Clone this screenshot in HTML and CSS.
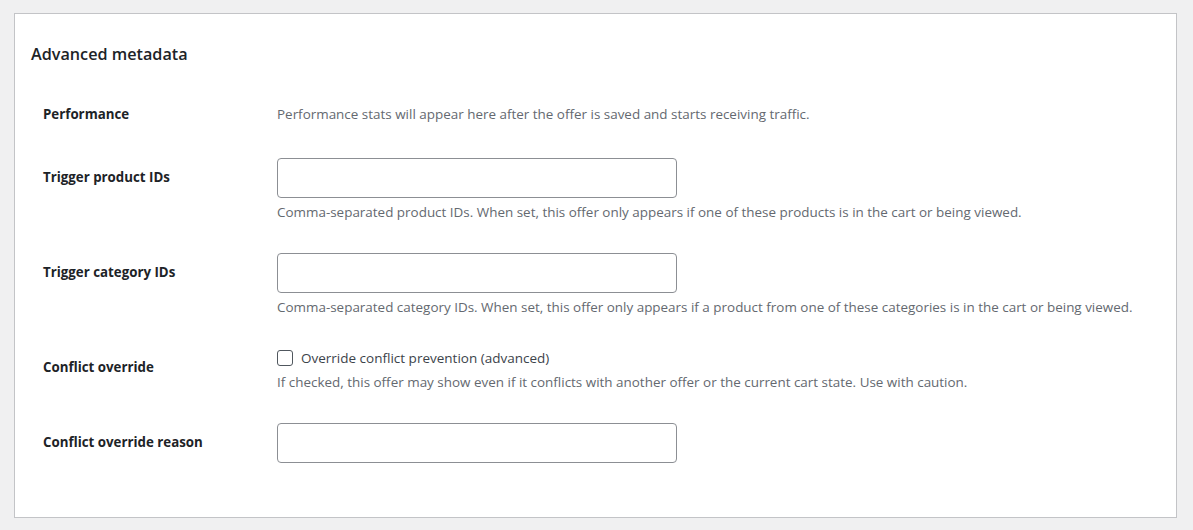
FILE: index.html
```html
<!DOCTYPE html>
<html lang="en">
<head>
<meta charset="utf-8">
<title>Advanced metadata</title>
<link rel="stylesheet" href="styles.css">
</head>
<body>
<div class="panel">
  <h2 class="panel-title">Advanced metadata</h2>
  <div class="form">
    <div class="row row-first">
      <div class="label label-inline">Performance</div>
      <div class="field"><p class="desc desc-inline">Performance stats will appear here after the offer is saved and starts receiving traffic.</p></div>
    </div>
    <div class="row">
      <div class="label">Trigger product IDs</div>
      <div class="field">
        <input class="text-input" type="text">
        <p class="desc">Comma-separated product IDs. When set, this offer only appears if one of these products is in the cart or being viewed.</p>
      </div>
    </div>
    <div class="row">
      <div class="label">Trigger category IDs</div>
      <div class="field">
        <input class="text-input" type="text">
        <p class="desc">Comma-separated category IDs. When set, this offer only appears if a product from one of these categories is in the cart or being viewed.</p>
      </div>
    </div>
    <div class="row">
      <div class="label">Conflict override</div>
      <div class="field">
        <label class="check"><span class="box"></span><span>Override conflict prevention (advanced)</span></label>
        <p class="desc">If checked, this offer may show even if it conflicts with another offer or the current cart state. Use with caution.</p>
      </div>
    </div>
    <div class="row">
      <div class="label">Conflict override reason</div>
      <div class="field">
        <input class="text-input" type="text">
      </div>
    </div>
  </div>
</div>
</body>
</html>
```

FILE: styles.css
```css
html, body {
  margin: 0;
  padding: 0;
  background: #f0f0f1;
}
body {
  padding: 13px 16px 0 14px;
  font-family: "Open Sans", "Noto Sans", sans-serif;
  color: #1d2327;
}
.panel {
  background: #fff;
  border: 1px solid #c3c4c7;
  box-sizing: border-box;
  height: 505px;
  padding: 28px 16px 0 16px;
}
.panel-title {
  margin: 0;
  font-size: 16.2px;
  line-height: 24px;
  font-weight: 600;
  color: #1d2327;
}
.form {
  display: flex;
  flex-direction: column;
  gap: 31px;
  margin-top: 38px;
  padding-left: 12px;
}
.row {
  display: grid;
  grid-template-columns: 234px 1fr;
}
.row-first {
  margin-bottom: 3px;
}
.label {
  font-size: 13.3px;
  font-weight: 700;
  line-height: 20px;
  padding-top: 9px;
  color: #1d2327;
}
.label-inline {
  padding-top: 0;
}
.field {
  display: flex;
  flex-direction: column;
  align-items: flex-start;
}
.desc {
  margin: 4px 0 0;
  font-size: 13.45px;
  line-height: 20px;
  color: #646970;
}
.desc-inline {
  margin-top: 0;
}
.text-input {
  box-sizing: border-box;
  width: 400px;
  height: 40px;
  margin: 0;
  border: 1px solid #8c8f94;
  border-radius: 4px;
  background: #fff;
}
.check {
  display: flex;
  align-items: center;
  gap: 8px;
  font-size: 13.5px;
  line-height: 20px;
  color: #3c434a;
}
.box {
  box-sizing: border-box;
  width: 16px;
  height: 16px;
  border: 1px solid #50575e;
  border-radius: 3px;
  background: #fff;
}
```
